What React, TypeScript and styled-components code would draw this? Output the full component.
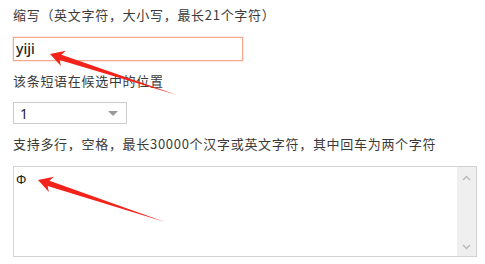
import React from "react";
import styled, { createGlobalStyle } from "styled-components";

const Global = createGlobalStyle`
  html, body { margin: 0; padding: 0; background: #ffffff; }
  body { font-family: "Noto Sans CJK SC", "Noto Sans", sans-serif; color: #333; }
`;

const Page = styled.div`
  position: relative;
  width: 485px;
  height: 264px;
  box-sizing: border-box;
  padding: 5px 8px 0 13px;
  display: flex;
  flex-direction: column;
  overflow: hidden;
`;

const Label = styled.div<{ $mt?: number }>`
  font-size: 13px;
  letter-spacing: 0.7px;
  line-height: 20px;
  color: #3a3a3a;
  margin-top: ${(p) => p.$mt ?? 0}px;
  white-space: nowrap;
`;

const TextInput = styled.div`
  width: 230px;
  height: 24px;
  box-sizing: border-box;
  border: 1px solid #f4a88c;
  box-shadow: 0 0 0 0.5px #fbd3c4;
  margin-top: 12px;
  padding: 0 2px;
  font-family: "Noto Sans", "Noto Sans CJK SC", sans-serif;
  font-size: 14px;
  font-weight: 500;
  line-height: 21px;
  color: #222;
`;

const Select = styled.div`
  width: 114px;
  height: 22px;
  box-sizing: border-box;
  border: 1px solid #cdcdcd;
  margin-top: 11px;
  display: flex;
  align-items: center;
  justify-content: space-between;
  padding: 0 8px 0 6px;
  font-family: "Noto Sans", sans-serif;
  font-size: 14px;
  color: #222;
`;

const Caret = styled.span`
  width: 0;
  height: 0;
  border-left: 5px solid transparent;
  border-right: 5px solid transparent;
  border-top: 5px solid #9a9a9a;
`;

const TextArea = styled.div`
  width: 464px;
  height: 91px;
  box-sizing: border-box;
  border: 1px solid #d2d2d6;
  margin-top: 12px;
  display: flex;
`;

const AreaContent = styled.div`
  flex: 1;
  padding: 5px 2px;
  font-family: "Liberation Sans", sans-serif;
  font-size: 13px;
  line-height: 16px;
  color: #222;
`;

const ScrollTrack = styled.div`
  width: 19px;
  background: #efefef;
  display: flex;
  flex-direction: column;
  justify-content: space-between;
  align-items: center;
  padding: 8px 0 6px;
`;

const Overlay = styled.svg`
  position: absolute;
  left: 0;
  top: 0;
  pointer-events: none;
`;

function Chevron({ up }: { up?: boolean }) {
  return (
    <svg width="9" height="6" viewBox="0 0 9 6">
      <path
        d={up ? "M1 5 L4.5 1.5 L8 5" : "M1 1 L4.5 4.5 L8 1"}
        fill="none"
        stroke="#b8b8b8"
        strokeWidth="1.4"
      />
    </svg>
  );
}

export default function App() {
  return (
    <>
      <Global />
      <Page>
        <Label>缩写（英文字符，大小写，最长21个字符）</Label>
        <TextInput>yiji</TextInput>
        <Label $mt={10}>该条短语在候选中的位置</Label>
        <Select>
          <span>1</span>
          <Caret />
        </Select>
        <Label $mt={10}>支持多行，空格，最长30000个汉字或英文字符，其中回车为两个字符</Label>
        <TextArea>
          <AreaContent>Φ</AreaContent>
          <ScrollTrack>
            <Chevron up />
            <Chevron />
          </ScrollTrack>
        </TextArea>
        <Overlay width="485" height="264" viewBox="0 0 485 264">
          <polygon
            points="50,54 65.9,50.7 61.4,54.7 177,95 59.6,60.1 60.9,65.9"
            fill="#f3221a"
          />
          <polygon
            points="38,180 53.9,176.7 49.4,180.7 165,222 47.6,186.1 48.9,191.9"
            fill="#f3221a"
          />
        </Overlay>
      </Page>
    </>
  );
}
